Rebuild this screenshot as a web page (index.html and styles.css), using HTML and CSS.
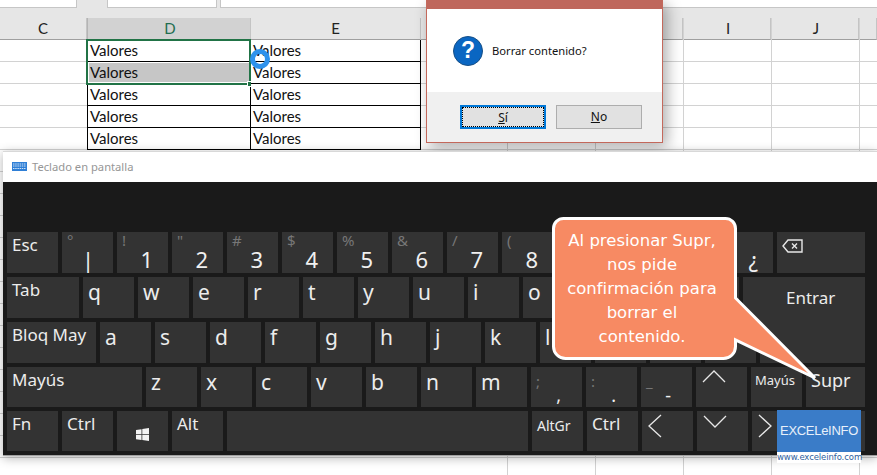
FILE: index.html
```html
<!DOCTYPE html>
<html lang="es">
<head>
<meta charset="utf-8">
<title>Teclado en pantalla</title>
<link rel="stylesheet" href="styles.css">
</head>
<body>
<div class="app">
  <div class="tabs"><div class="tab t1"></div><div class="tab t2"></div><div class="tab t3"></div></div>
  <div class="sheet">
    <div class="col c-c"><div class="hd">C</div></div>
    <div class="col c-d">
      <div class="hd sel">D</div>
      <div class="cell">Valores</div><div class="cell active">Valores</div><div class="cell">Valores</div><div class="cell">Valores</div><div class="cell">Valores</div>
      <div class="selection"><span class="handle"></span></div>
    </div>
    <div class="col c-e">
      <div class="hd">E</div>
      <div class="cell">Valores</div><div class="cell">Valores</div><div class="cell">Valores</div><div class="cell">Valores</div><div class="cell">Valores</div>
      <div class="busy"></div>
    </div>
    <div class="col c-n"><div class="hd"></div></div>
    <div class="col c-m"><div class="hd"></div></div>
    <div class="col c-m"><div class="hd"></div></div>
    <div class="col c-m"><div class="hd">I</div></div>
    <div class="col c-m"><div class="hd">J</div></div>
    <div class="col c-l"><div class="hd"></div></div>
  </div>

  <div class="dialog">
    <div class="dlg-title"></div>
    <div class="dlg-body"><div class="qmark">?</div><div class="dlg-text">Borrar contenido?</div></div>
    <div class="dlg-foot">
      <div class="btn default"><span class="focus"><u>S</u>í</span></div>
      <div class="btn"><span class="focus-none"><u>N</u>o</span></div>
    </div>
  </div>

  <div class="osk">
    <div class="osk-title">
      <svg class="kb-icon" width="15" height="9" viewBox="0 0 15 9"><rect width="15" height="9" fill="#2f7fd6"/><path d="M1 2h13M1 4h13M1 6.500h13" stroke="#cfe3f7" stroke-width="1" stroke-dasharray="1.500 .7"/></svg>
      <span>Teclado en pantalla</span>
    </div>
    <div class="keys">
      <div class="row">
        <div class="key fn">Esc</div>
        <div class="key num"><span class="sec">°</span><span class="main bar">|</span></div>
        <div class="key num"><span class="sec">!</span><span class="main">1</span></div>
        <div class="key num"><span class="sec">"</span><span class="main">2</span></div>
        <div class="key num"><span class="sec">#</span><span class="main">3</span></div>
        <div class="key num"><span class="sec">$</span><span class="main">4</span></div>
        <div class="key num"><span class="sec">%</span><span class="main">5</span></div>
        <div class="key num"><span class="sec">&amp;</span><span class="main">6</span></div>
        <div class="key num"><span class="sec">/</span><span class="main">7</span></div>
        <div class="key num"><span class="sec">(</span><span class="main">8</span></div>
        <div class="key"></div>
        <div class="key"></div>
        <div class="key"></div>
        <div class="key num"><span class="sec">&nbsp;</span><span class="main">¿</span></div>
        <div class="key w88 icon-key">
          <svg width="21" height="14" viewBox="0 0 21 14" fill="none" stroke="#e8e8e8" stroke-width="1.400"><path d="M6 1h14v12H6L1 7z"/><path d="M10 4.500l5 5M15 4.500l-5 5"/></svg>
        </div>
      </div>
      <div class="row">
        <div class="key fn w72">Tab</div>
        <div class="key let">q</div><div class="key let">w</div><div class="key let">e</div><div class="key let">r</div><div class="key let">t</div><div class="key let">y</div><div class="key let">u</div><div class="key let">i</div><div class="key let">o</div><div class="key"></div><div class="key"></div><div class="key"></div>
        <div class="key enter-top">Entrar</div>
      </div>
      <div class="row">
        <div class="key fn w89">Bloq May</div>
        <div class="key let">a</div><div class="key let">s</div><div class="key let">d</div><div class="key let">f</div><div class="key let">g</div><div class="key let">h</div><div class="key let">j</div><div class="key let">k</div><div class="key let">l</div><div class="key"></div><div class="key"></div><div class="key"></div>
        <div class="key enter-bot"></div>
      </div>
      <div class="row short">
        <div class="key fn w135">Mayús</div>
        <div class="key let">z</div><div class="key let">x</div><div class="key let">c</div><div class="key let">v</div><div class="key let">b</div><div class="key let">n</div><div class="key let">m</div>
        <div class="key num punct"><span class="sec">;</span><span class="main">,</span></div>
        <div class="key num punct"><span class="sec">:</span><span class="main">.</span></div>
        <div class="key num punct"><span class="sec">_</span><span class="main">-</span></div>
        <div class="key arrow arrow-up"><svg width="24" height="13" viewBox="0 0 24 13" fill="none" stroke="#e8e8e8" stroke-width="1.300"><path d="M1 12L12 1l11 11"/></svg></div>
        <div class="key small">Mayús</div>
        <div class="key supr">Supr</div>
      </div>
      <div class="row short">
        <div class="key fn">Fn</div>
        <div class="key fn">Ctrl</div>
        <div class="key win"><svg width="13" height="13" viewBox="0 0 13 13" fill="#f2f2f2"><path d="M0 2l5.500-.8v5H0zM6.300 1.100L13 0v6.200H6.300zM0 7h5.500v5L0 11.200zM6.300 7H13v6l-6.700-1z"/></svg></div>
        <div class="key fn">Alt</div>
        <div class="key space"></div>
        <div class="key small altgr">AltGr</div>
        <div class="key fn">Ctrl</div>
        <div class="key arrow"><svg width="14" height="24" viewBox="0 0 14 24" fill="none" stroke="#e8e8e8" stroke-width="1.300"><path d="M13 1L1 12l12 11"/></svg></div>
        <div class="key arrow arrow-down"><svg width="24" height="13" viewBox="0 0 24 13" fill="none" stroke="#e8e8e8" stroke-width="1.300"><path d="M1 1l11 11L23 1"/></svg></div>
        <div class="key arrow"><svg width="14" height="24" viewBox="0 0 14 24" fill="none" stroke="#e8e8e8" stroke-width="1.300"><path d="M1 1l12 11L1 23"/></svg></div>
        <div class="key wide-last"></div>
      </div>
    </div>
  </div>

  <div class="callout">
    <svg class="callout-shape" width="270" height="166" viewBox="0 0 270 166"><path d="M11.500 1.500H173.500a10 10 0 0 1 10 10V81L263 161 183.500 123V129.500a12 12 0 0 1-12 12H13.500a12 12 0 0 1-12-12V11.500a10 10 0 0 1 10-10z" fill="#f78a63" stroke="#fff" stroke-width="3" stroke-linejoin="miter"/></svg>
    <p class="callout-text">Al presionar Supr, nos pide confirmación para borrar el contenido.</p>
  </div>

  <div class="brand">
    <div class="brand-name">EXCELeINFO</div>
    <div class="brand-url">www.exceleinfo.com</div>
  </div>
</div>
</body>
</html>
```
FILE: styles.css
```css
* { box-sizing: border-box; }
html, body { margin: 0; padding: 0; }
body { width: 877px; height: 475px; overflow: hidden; background: #fff; }
.app { position: relative; width: 877px; height: 475px; overflow: hidden; background: #e6e6e6; }

.tabs { display: flex; height: 8px; }
.tab { background: #fff; border: 1px solid #c6c6c6; border-top: 0; height: 8px; }
.t1 { width: 77px; margin-right: 30px; border-left: 0; }
.t2 { width: 110px; margin-right: 3px; }
.t3 { flex: 1; border-right: 0; }

.sheet { display: flex; height: 457px; margin-top: 10px; background: #fff; }
.col {
  position: relative;
  height: 100%;
  flex: none;
  border-right: 1px solid #d2d2d2;
  background: repeating-linear-gradient(to bottom, transparent 0, transparent 21px, #d2d2d2 21px, #d2d2d2 22px) 0 22px;
}
.c-c { width: 87px; border-right: 0; }
.c-d { width: 164px; border-right: 0; }
.c-e { width: 170px; border-right: 0; }
.c-n { width: 87px; }
.c-m { width: 88px; }
.c-l { flex: 1; border-right: 0; }
.c-m .hd, .c-d .hd { padding-left: 2px; }
.hd {
  height: 22px;
  background: #e6e6e6;
  border-bottom: 1px solid #9f9f9f;
  border-right: 1px solid #c4c4c4;
  text-align: center;
  font: 15px/21px "Lato", "Liberation Sans", sans-serif;
  color: #222;
}
.hd.sel { background: #d2d2d2; color: #1f6e50; border-left: 1px solid #b4b4b4; }

.cell {
  height: 22px;
  padding-left: 2px;
  background: #fff;
  border-right: 1px solid #000;
  border-bottom: 1px solid #000;
  font: 15px/21px "Lato", "Liberation Sans", sans-serif;
  color: #111;
}
.c-d .cell { border-left: 1px solid #000; }
.cell.active { background: #c6c6c6; box-shadow: inset 0 0 0 1px #fff; }

.selection {
  position: absolute;
  left: -1px;
  top: 21px;
  width: 165px;
  height: 46px;
  border: 2px solid #217346;
}
.handle {
  position: absolute;
  right: -4px;
  bottom: -4px;
  background: #217346;
  border: 1px solid #fff;
  box-sizing: content-box;
  width: 4px;
  height: 4px;
}
.busy {
  position: absolute;
  left: -1px;
  top: 31px;
  width: 20px;
  height: 20px;
  border-radius: 50%;
  border: 5px solid #2e92ec;
}

.dialog {
  position: absolute;
  left: 426px;
  top: 0;
  width: 237px;
  height: 143px;
  display: flex;
  flex-direction: column;
  border: 1px solid #c4695c;
  border-top: 0;
  background: #fff;
  box-shadow: 4px 4px 14px rgba(0, 0, 0, .32);
  color: #111;
}
.dlg-title { height: 9px; background: #bf675c; }
.dlg-body { flex: 1; display: flex; align-items: center; padding: 0 0 0 26px; gap: 9px; margin-top: 1px; }
.qmark {
  width: 30px;
  height: 30px;
  border-radius: 50%;
  background: #0a66c2;
  border: 1px solid #174f86;
  color: #fff;
  text-align: center;
  font: bold 23px/27px "Liberation Sans", sans-serif;
}
.dlg-text { font: 11.200px/16px "Noto Sans", sans-serif; margin-top: -1px; }
.dlg-foot { height: 50px; background: #f0f0f0; display: flex; gap: 10px; padding: 13px 0 0 33px; }
.btn {
  width: 86px;
  height: 24px;
  background: #e1e1e1;
  border: 1px solid #adadad;
  text-align: center;
  font: 12px/22px "Noto Sans", sans-serif;
}
.btn.default { border: 2px solid #0078d7; }
.focus { display: block; height: 20px; line-height: 19px; border: 1px dotted #000; }

.osk {
  position: absolute;
  left: 3px;
  top: 151px;
  right: 0;
  height: 305px;
  background: #1a1a1a;
  border-top: 1px solid #d8d8d8;
  border-bottom: 1px solid #a0a0a0;
  box-shadow: 0 2px 10px rgba(0, 0, 0, .3);
}
.osk-title {
  height: 30px;
  background: #fff;
  display: flex;
  align-items: center;
  gap: 5px;
  padding-left: 9px;
  font: 11.200px/18px "Noto Sans", sans-serif;
  color: #969696;
}
.kb-icon { flex: none; margin-top: -1px; }
.keys { display: flex; flex-direction: column; gap: 4px; padding: 50px 9px 0 4px; }
.row { display: flex; gap: 4px; height: 41px; }
.row.short { height: 40px; }

.key {
  flex: none;
  width: 51px;
  height: 100%;
  background: #333;
  color: #ececec;
  font-family: "Noto Sans", "Open Sans", sans-serif;
}
.fn { font-size: 17px; line-height: 24px; padding: 1px 0 0 5px; }
.let { font-size: 21px; line-height: 30px; padding-left: 5px; }
.num { display: flex; flex-direction: column; padding: 0 15px 0 5px; }
.sec { font-size: 15px; line-height: 16px; color: #777; }
.main { font-size: 22px; line-height: 24px; text-align: right; color: #f0f0f0; margin-top: -1px; }
.main.bar { margin-right: 4px; }
.punct { padding: 6px 21px 0 5px; }
.punct .main { font-size: 18px; line-height: 18px; margin-top: -3px; }
.w72 { width: 72px; }
.w88 { width: 88px; }
.w89 { width: 89px; }
.w135 { width: 135px; }
.icon-key { padding: 4px 0 0 5px; }
.enter-top {
  width: 122px;
  height: 45px;
  padding: 8px 0 0 43px;
  font-size: 17px;
  line-height: 26px;
}
.enter-bot { width: 105px; }
.small { font-size: 13px; line-height: 24px; padding: 1px 0 0 4px; }
.altgr { font-size: 14px; line-height: 28px; padding-left: 5px; }
.supr { width: 59px; font-size: 18px; line-height: 26px; padding-left: 5px; }
.space { width: 301px; }
.win { display: flex; justify-content: center; align-items: center; padding-top: 6px; }
.arrow { display: flex; align-items: flex-start; padding: 3px 0 0 6px; }
.arrow-down { padding-top: 4px; }
.wide-last { width: 58px; }

.callout { position: absolute; left: 552px; top: 217px; width: 270px; height: 166px; }
.callout-shape { display: block; position: absolute; left: 0; top: 0; }
.callout-text {
  position: relative;
  width: 180px;
  margin: 0;
  padding: 12px 13px 0;
  text-align: center;
  color: #fff;
  font: 16.500px/24px "DejaVu Sans", sans-serif;
}

.brand { position: absolute; left: 777px; top: 410px; width: 84px; height: 53px; background: #fff; }
.brand-name {
  height: 42px;
  background: #3a7cc8;
  color: #e8f0fa;
  text-align: center;
  font: 13px/42px "Liberation Sans", sans-serif;
  letter-spacing: -.3px;
}
.brand-url { color: #2f5f9e; text-align: center; font: 8.500px/11px "DejaVu Sans", sans-serif; white-space: nowrap; letter-spacing: -.1px; }
```
